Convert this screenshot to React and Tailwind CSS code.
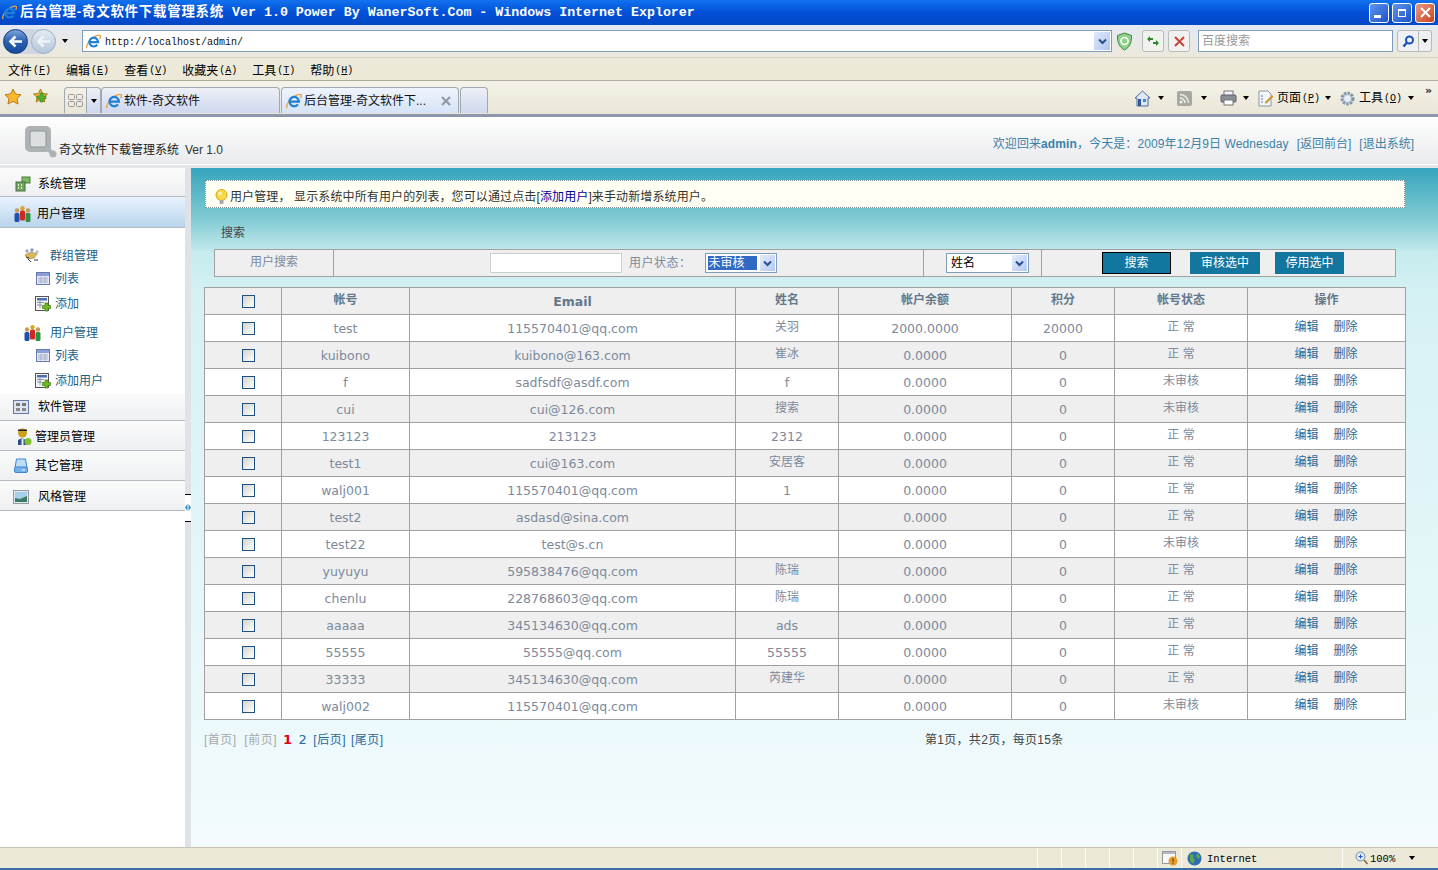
import React from "react";

const cjk = "font-['Liberation_Sans','Noto_Sans_CJK_SC',sans-serif]";
const verdana = "font-['DejaVu_Sans','Noto_Sans_CJK_SC',sans-serif]";
const mono = "font-['Liberation_Mono','Noto_Sans_CJK_SC',monospace]";

const users = [
  ["test", "115570401@qq.com", "关羽", "2000.0000", "20000", "正 常"],
  ["kuibono", "kuibono@163.com", "崔冰", "0.0000", "0", "正 常"],
  ["f", "sadfsdf@asdf.com", "f", "0.0000", "0", "未审核"],
  ["cui", "cui@126.com", "搜索", "0.0000", "0", "未审核"],
  ["123123", "213123", "2312", "0.0000", "0", "正 常"],
  ["test1", "cui@163.com", "安居客", "0.0000", "0", "正 常"],
  ["walj001", "115570401@qq.com", "1", "0.0000", "0", "正 常"],
  ["test2", "asdasd@sina.com", "", "0.0000", "0", "正 常"],
  ["test22", "test@s.cn", "", "0.0000", "0", "未审核"],
  ["yuyuyu", "595838476@qq.com", "陈瑞", "0.0000", "0", "正 常"],
  ["chenlu", "228768603@qq.com", "陈瑞", "0.0000", "0", "正 常"],
  ["aaaaa", "345134630@qq.com", "ads", "0.0000", "0", "正 常"],
  ["55555", "55555@qq.com", "55555", "0.0000", "0", "正 常"],
  ["33333", "345134630@qq.com", "芮建华", "0.0000", "0", "正 常"],
  ["walj002", "115570401@qq.com", "", "0.0000", "0", "未审核"],
];

const IeLogo = ({ size = 16 }) => (
  <svg width={size} height={size} viewBox="0 0 16 16" className="shrink-0">
    <path d="M1 15.200C-.2 12.500 3 6.500 8 3.500c3-1.800 6-2.800 7.200-1.700.8.800.2 2.200-.8 3.400" fill="none" stroke="#e8a33a" strokeWidth="1.300" />
    <path d="M4.300 8.600h8.600A4.700 4.700 0 1 0 12 11.400" fill="none" stroke="#1f80d8" strokeWidth="2.300" />
  </svg>
);

const Arrow = ({ className = "" }) => (
  <span className={`w-0 h-0 border-x-[3.5px] border-x-transparent border-t-[4px] border-t-black shrink-0 ${className}`} />
);

const Chevron = () => (
  <svg width="9" height="7" viewBox="0 0 9 7"><path d="M1 1.500l3.500 3.500L8 1.500" fill="none" stroke="#2a4f8f" strokeWidth="2" /></svg>
);

const Blocks = ({ c = "#6fa85c" }) => (
  <svg width="16" height="16" viewBox="0 0 16 16"><rect x="7" y="1" width="8" height="6" fill="#7dba5e" stroke="#4d7d3a" /><rect x="1" y="6" width="9" height="9" fill={c} stroke="#4d6d4a" /><path d="M3 9h1M6 9h1M3 12h1M6 12h1" stroke="#fff" strokeWidth="1.500" /></svg>
);

const People = () => (
  <svg width="17" height="16" viewBox="0 0 17 16">
    <circle cx="8.500" cy="2.200" r="2.200" fill="#d8a82a" /><rect x="6" y="4.500" width="5" height="10" rx="1.500" fill="#cf2a20" />
    <circle cx="3" cy="4.500" r="2.200" fill="#c89a5a" /><rect x=".5" y="7" width="5" height="9" rx="1.500" fill="#1f52b0" />
    <circle cx="14" cy="4.500" r="2.200" fill="#c89a5a" /><rect x="11.500" y="7" width="5" height="9" rx="1.500" fill="#2f9040" />
  </svg>
);

const Gears = () => (
  <svg width="16" height="15" viewBox="0 0 16 15">
    <circle cx="3" cy="3" r="1.700" fill="#9aa8b8" /><circle cx="8" cy="2" r="1.700" fill="#8a98a8" /><circle cx="13" cy="4" r="1.700" fill="#b8c0c8" />
    <path d="M1 7l6-3 6 2-3 4-6 1z" fill="#d8b85a" stroke="#8a7a3a" strokeWidth=".6" /><path d="M4 11l3 3M10 12h4M2 9l3 1" stroke="#333" />
  </svg>
);

const ListIcon = () => (
  <svg width="14" height="13" viewBox="0 0 14 13"><rect x=".5" y=".5" width="13" height="12" fill="#e8ecf8" stroke="#6678b0" /><rect x="1" y="1" width="12" height="3" fill="#8d9fd8" /><path d="M2 6h10M2 8h10M2 10h10M5 4.500v7M9 4.500v7" stroke="#a8b0c8" /></svg>
);

const AddIcon = () => (
  <svg width="16" height="16" viewBox="0 0 16 16"><rect x=".5" y=".5" width="13" height="14" fill="#f4f4f4" stroke="#555" /><rect x="2" y="2" width="10" height="2.500" fill="#4a6fb0" /><path d="M2 6.500h7M2 9h5M5 5v7" stroke="#8a94a8" /><path d="M10 7h3v2.500h2.500v3H13V15h-3v-2.500H7.500v-3H10z" fill="#6dbb1e" stroke="#3f7d10" strokeWidth=".7" /></svg>
);

const Admin = () => (
  <svg width="16" height="18" viewBox="0 0 16 18"><circle cx="6.500" cy="5" r="4.500" fill="#c9a020" /><path d="M2 3h9v-1.500H2z" fill="#222" /><path d="M2 17v-5l4-2 4 2v5z" fill="#2c4f8c" /><path d="M5.500 10.500h2V17h-2z" fill="#eee" /><circle cx="12" cy="13.500" r="3.500" fill="#7fbf2a" /></svg>
);

const Drive = () => (
  <svg width="14" height="15" viewBox="0 0 14 15"><path d="M2.500 1h9l1.500 9H1z" fill="#bcdcf8" stroke="#3d85d0" /><rect x=".5" y="9" width="13" height="5.500" rx="1.500" fill="#72b0ee" stroke="#3d85d0" /><path d="M8 12h3" stroke="#fff" /></svg>
);

const Landscape = () => (
  <svg width="16" height="14" viewBox="0 0 16 14"><rect x=".5" y=".5" width="15" height="13" fill="#d8e8f4" stroke="#999" /><rect x="2" y="2" width="12" height="10" fill="#a8cfe8" /><path d="M2 12V8l5 1 7-3v6z" fill="#3d7a68" /></svg>
);

const Grid4 = () => (
  <svg width="16" height="14" viewBox="0 0 16 14"><rect x=".5" y=".5" width="15" height="13" fill="#dfe4f4" stroke="#6678a8" /><rect x="3" y="3" width="4" height="3" fill="#777" /><rect x="9" y="3" width="4" height="3" fill="#777" /><rect x="3" y="8" width="4" height="3" fill="#888" /><rect x="9" y="8" width="4" height="3" fill="#888" /></svg>
);

const Bulb = () => (
  <svg width="13" height="16" viewBox="0 0 13 16" className="shrink-0"><circle cx="6.500" cy="6" r="5.500" fill="#f8d848" stroke="#d8a818" /><circle cx="5" cy="4.500" r="1.800" fill="#fff6c0" /><rect x="4.500" y="11" width="4" height="4" rx="1" fill="#a8a8a8" /></svg>
);

const Star = ({ fill, stroke }) => (
  <svg width="18" height="17" viewBox="0 0 18 17"><path d="M9 1l2.400 5 5.600.7-4 3.900 1 5.400L9 13.400 4 16l1-5.400-4-3.900L6.600 6z" fill={fill} stroke={stroke} /></svg>
);

const NavCircle = ({ active }) => (
  <span className={`w-[25px] h-[25px] rounded-full flex items-center justify-center border shrink-0 ${active ? "bg-gradient-to-b from-[#7ba4dc] via-[#2a5fb0] to-[#174a9c] border-[#1b3d78]" : "bg-gradient-to-b from-[#e4ebf3] to-[#b4c6da] border-[#9fb2c8]"}`}>
    <svg width="15" height="13" viewBox="0 0 15 13"><path d="M14 6.500H5M7.500 1.500L2.500 6.500l5 5" fill="none" stroke={active ? "#fff" : "#eef3f8"} strokeWidth="2.600" /></svg>
  </span>
);

const TabShell = ({ children, active, className = "" }) => (
  <div className={`h-[26px] border border-b-0 border-[#a0a8b0] rounded-t-[4px] flex items-center ${active ? "bg-gradient-to-b from-[#eef4fc] to-[#d6e3f7]" : "bg-gradient-to-b from-[#eef0f4] via-[#dde3f3] to-[#cfd8ee]"} ${className}`}>
    {children}
  </div>
);

const WinBtn = ({ children, red }) => (
  <span className={`w-[20px] h-[20px] rounded-[3px] border border-white flex items-center justify-center ${red ? "bg-gradient-to-br from-[#e89a80] to-[#c8401c]" : "bg-gradient-to-br from-[#5f96ee] to-[#1c50c8]"}`}>
    {children}
  </span>
);

const Menu = ({ label, k }) => (
  <span className="flex items-center whitespace-nowrap">
    {label}
    <span className={`${mono} text-[10px] ml-[1px]`}>(<u>{k}</u>)</span>
  </span>
);

const TitleBar = () => (
  <div className="h-[25px] flex items-center pl-[2px] pr-[3px] bg-gradient-to-b from-[#1272ee] via-[#0450d8] to-[#0348c4] text-white font-bold whitespace-nowrap">
    <IeLogo size={15} />
    <span className={`${cjk} text-[13.500px] ml-[3px] tracking-[0.700px]`}>后台管理-奇文软件下载管理系统</span>
    <span className={`${mono} text-[13.300px] ml-[8px]`}>Ver 1.0 Power By WanerSoft.Com - Windows Internet Explorer</span>
    <div className="ml-auto flex gap-[3px]">
      <WinBtn><span className="w-[7px] h-[3px] bg-white mt-[8px] mr-[4px]" /></WinBtn>
      <WinBtn><span className="w-[8px] h-[8px] border border-t-2 border-white" /></WinBtn>
      <WinBtn red><svg width="11" height="11" viewBox="0 0 11 11"><path d="M1 1l9 9M10 1l-9 9" stroke="#fff" strokeWidth="2" /></svg></WinBtn>
    </div>
  </div>
);

const AddressBar = () => (
  <div className="h-[33px] flex items-center pl-[3px] bg-gradient-to-b from-[#e4e9f3] to-[#ece9dc] border-b border-[#d6d2c2]">
    <div className="flex gap-[3px] items-center bg-[#cfd6e0] rounded-full">
      <NavCircle active />
      <NavCircle />
    </div>
    <Arrow className="ml-[6px]" />
    <div className="ml-[14px] w-[1030px] h-[22px] bg-white border border-[#7f9db9] flex items-center pl-[3px]">
      <IeLogo size={15} />
      <span className={`${mono} text-[10px] ml-[4px] mt-[2px] text-[#111]`}>http://localhost/admin/</span>
      <span className="ml-auto w-[16px] h-[18px] mr-[1px] bg-gradient-to-br from-[#dfe8fc] to-[#b0c6f0] flex items-center justify-center"><Chevron /></span>
    </div>
    <svg width="17" height="19" viewBox="0 0 17 19" className="ml-[4px]"><path d="M8.500 1l7 2.500c0 7-1.500 11.500-7 14.500C3 15 1.500 10.500 1.500 3.500z" fill="#8fd08a" stroke="#3d8a44" /><circle cx="8.500" cy="9" r="3.500" fill="none" stroke="#fff" strokeWidth="1.600" /></svg>
    <span className="ml-[9px] w-[22px] h-[22px] rounded-[3px] border border-[#b8bcb8] bg-[#f1f2ef] flex items-center justify-center">
      <svg width="14" height="12" viewBox="0 0 14 12"><path d="M1 4l3-3v2h3v2H4v2zM13 8l-3 3V9H7V7h3V5z" fill="#2c8a2c" /></svg>
    </span>
    <span className="ml-[4px] w-[22px] h-[22px] rounded-[3px] border border-[#b8bcb8] bg-[#f1f2ef] flex items-center justify-center">
      <svg width="11" height="11" viewBox="0 0 11 11"><path d="M1 1l9 9M10 1l-9 9" stroke="#c8443c" strokeWidth="2" /></svg>
    </span>
    <div className={`${cjk} ml-[8px] w-[195px] h-[22px] bg-white border border-[#7f9db9] flex items-center pl-[3px] text-[12px] text-[#999]`}>百度搜索</div>
    <span className="ml-[4px] w-[22px] h-[22px] rounded-l-[3px] border border-[#b8bcb8] bg-[#eef0f2] flex items-center justify-center">
      <svg width="13" height="13" viewBox="0 0 13 13"><circle cx="7.500" cy="5" r="3.500" fill="none" stroke="#1c50b8" strokeWidth="2" /><path d="M5 7.500L1.500 11.500" stroke="#1c50b8" strokeWidth="2.400" /></svg>
    </span>
    <span className="w-[13px] h-[22px] rounded-r-[3px] border border-l-0 border-[#b8bcb8] bg-[#eef0f2] flex items-center justify-center"><Arrow className="border-t-[#1c50b8]" /></span>
  </div>
);

const MenuBar = () => (
  <div className={`${cjk} h-[23px] flex items-center gap-[15px] pl-[8px] pt-[3px] text-[12px] text-black bg-[#ece9d8] border-b border-[#b0ac9e]`}>
    <Menu label="文件" k="F" />
    <Menu label="编辑" k="E" />
    <Menu label="查看" k="V" />
    <Menu label="收藏夹" k="A" />
    <Menu label="工具" k="T" />
    <Menu label="帮助" k="H" />
  </div>
);

const TabBar = () => (
  <div className={`${cjk} h-[36px] flex items-end pl-[4px] text-[12px] bg-gradient-to-b from-[#f5f3e9] to-[#e9e6d7] border-b-[3px] border-[#8e96ac] relative`}>
    <div className="flex items-center self-center mt-[-3px]">
      <Star fill="#f8b830" stroke="#c07810" />
      <span className="ml-[10px]"><svg width="17" height="17" viewBox="0 0 17 17"><path d="M8.500 1l2 4.500 5 .5-3.700 3.300 1 4.700-4.300-2.500L4.200 14l1-4.700L1.500 6l5-.5z" fill="#e8b840" stroke="#a87818" /><path d="M8 5h3v3h3v3h-3v3H8v-3H5V8h3z" fill="#58b02c" stroke="#2d7a10" strokeWidth=".5" /></svg></span>
    </div>
    <div className="flex items-end ml-[15px] mb-[1px]">
      <TabShell className="w-[23px] justify-center rounded-r-none bg-none">
        <svg width="15" height="13" viewBox="0 0 15 13" fill="none" stroke="#999"><rect x=".5" y=".5" width="6" height="5" rx="1" /><rect x="8.500" y=".5" width="6" height="5" rx="1" /><rect x=".5" y="7.500" width="6" height="5" rx="1" /><rect x="8.500" y="7.500" width="6" height="5" rx="1" /></svg>
      </TabShell>
      <TabShell className="w-[14px] justify-center rounded-l-none border-l-0"><Arrow /></TabShell>
      <TabShell className="w-[179px] pl-[4px] text-[#111]">
        <IeLogo size={16} />
        <span className="ml-[2px]">软件-奇文软件</span>
      </TabShell>
      <TabShell active className="w-[178px] ml-[1px] pl-[4px] text-[#111]">
        <IeLogo size={16} />
        <span className="ml-[2px] whitespace-nowrap">后台管理-奇文软件下...</span>
        <svg width="10" height="10" viewBox="0 0 10 10" className="ml-auto mr-[7px]"><path d="M1 1l8 8M9 1l-8 8" stroke="#8f97a6" strokeWidth="2" /></svg>
      </TabShell>
      <TabShell className="w-[28px] ml-[1px]" />
    </div>
    <div className="ml-auto flex items-center self-center mt-[1px] pr-[24px]">
      <svg width="17" height="17" viewBox="0 0 17 17"><path d="M8.500 1L1 8h2v8h11V8h2z" fill="#dfe8f2" stroke="#4a6a98" /><rect x="4" y="9" width="3" height="7" fill="#2c5aa0" /><rect x="9" y="9" width="3" height="3" fill="#3d88d8" /></svg>
      <Arrow className="ml-[7px]" />
      <svg width="15" height="15" viewBox="0 0 15 15" className="ml-[13px]"><rect width="15" height="15" rx="2" fill="#a8a8a0" /><circle cx="4" cy="11" r="1.500" fill="#f2f2ee" /><path d="M3 7a5 5 0 0 1 5 5M3 3.500A8.500 8.500 0 0 1 11.500 12" fill="none" stroke="#f2f2ee" strokeWidth="1.400" /></svg>
      <Arrow className="ml-[9px] border-t-[#c8c8c0]" />
      <svg width="17" height="16" viewBox="0 0 17 16" className="ml-[13px]"><rect x="4" y="1" width="9" height="5" fill="#f4f4f4" stroke="#777" /><rect x="1" y="5" width="15" height="7" rx="1" fill="#8a8f98" stroke="#5a5f68" /><rect x="4" y="10" width="9" height="5" fill="#fff" stroke="#777" /></svg>
      <Arrow className="ml-[6px]" />
      <svg width="16" height="17" viewBox="0 0 16 17" className="ml-[9px]"><path d="M1 1h9l3 3v12H1z" fill="#f4f6fa" stroke="#8a96a8" /><path d="M3 6h2M3 9h2M3 12h2" stroke="#4a80c0" /><path d="M7 12l7-7 1.500 1.500-7 7H7z" fill="#c89838" /></svg>
      <span className="ml-[3px] flex items-center"><Menu label="页面" k="P" /></span>
      <Arrow className="ml-[5px]" />
      <svg width="17" height="17" viewBox="0 0 17 17" className="ml-[8px]"><circle cx="8.500" cy="8.500" r="5.500" fill="#c8d4de" stroke="#7f95a8" strokeWidth="3" strokeDasharray="2.400 1.200" /><circle cx="8.500" cy="8.500" r="3" fill="#e8eef4" /></svg>
      <span className="ml-[3px] flex items-center"><Menu label="工具" k="O" /></span>
      <Arrow className="ml-[6px]" />
    </div>
    <span className={`${verdana} absolute right-[6px] top-[4px] text-[11px] font-bold leading-none text-[#222]`}>»</span>
  </div>
);

const PageHeader = () => (
  <div className={`${cjk} h-[48px] flex items-end pl-[24px] pr-[24px] pb-[5px] bg-gradient-to-b from-white to-[#e9eaec] border-b border-white text-[12px]`}>
    <svg width="34" height="34" viewBox="0 0 34 34">
      <rect x="1" y="1" width="26" height="26" rx="5" fill="#aeb2b4" /><rect x="6" y="6" width="16" height="16" rx="2" fill="#dcdfe0" stroke="#8f9496" />
      <path d="M22 22l7 7" stroke="#aeb2b4" strokeWidth="4" /><circle cx="29" cy="29" r="3.500" fill="#aeb2b4" />
    </svg>
    <span className="ml-[1px] text-[#222]">奇文软件下载管理系统</span>
    <span className="ml-[6px] text-[#333]">Ver 1.0</span>
    <span className="ml-auto mb-[6px] text-[#3b82a8] whitespace-nowrap">
      <span className="tracking-[0.100px]">欢迎回来<b>admin</b>，今天是：2009年12月9日 Wednesday</span>
      <span className="ml-[8px]">[返回前台]</span>
      <span className="ml-[8px]">[退出系统]</span>
    </span>
  </div>
);

const NavRow = ({ icon, label, h, active, gap = 10, pl = 14, pt = 0 }) => (
  <div
    className={`flex items-center border-b border-[#b4bcc2] text-black ${active ? "bg-gradient-to-b from-[#eaf3fd] to-[#b8d4ec]" : "bg-gradient-to-b from-[#fbfbfb] to-[#eef0f2]"}`}
    style={{ height: h, paddingLeft: pl, paddingTop: pt }}
  >
    <span className="shrink-0 flex justify-center" style={{ marginRight: gap }}>{icon}</span>
    {label}
  </div>
);

const SubRow = ({ icon, label, h, pl, gap, mt = 0 }) => (
  <div className="flex items-center text-[#1a6188]" style={{ height: h, paddingLeft: pl, marginTop: mt }}>
    <span className="shrink-0" style={{ marginRight: gap }}>{icon}</span>
    {label}
  </div>
);

const Sidebar = () => (
  <aside className={`${cjk} w-[185px] shrink-0 bg-white text-[12px]`}>
    <NavRow icon={<Blocks />} label="系统管理" h={29} pl={15} gap={7} pt={4} />
    <NavRow icon={<People />} label="用户管理" h={31} pl={14} gap={6} active pt={4} />
    <div className="pt-[14px] h-[165px]">
      <SubRow icon={<Gears />} label="群组管理" h={27} pl={24} gap={10} />
      <SubRow icon={<ListIcon />} label="列表" h={19} pl={36} gap={5} />
      <SubRow icon={<AddIcon />} label="添加" h={31} pl={35} gap={4} />
      <SubRow icon={<People />} label="用户管理" h={27} pl={24} gap={9} />
      <SubRow icon={<ListIcon />} label="列表" h={19} pl={36} gap={5} />
      <SubRow icon={<AddIcon />} label="添加用户" h={25} mt={3} pl={35} gap={4} />
    </div>
    <NavRow icon={<Grid4 />} label="软件管理" h={28} pl={13} gap={9} />
    <NavRow icon={<Admin />} label="管理员管理" h={30} pl={16} gap={3} pt={2} />
    <NavRow icon={<Drive />} label="其它管理" h={30} pl={14} gap={7} />
    <NavRow icon={<Landscape />} label="风格管理" h={30} pl={13} gap={9} pt={2} />
  </aside>
);

const Splitter = () => (
  <div className="w-[6px] shrink-0 bg-[#dfe3e8] flex items-center">
    <div className="h-[28px] w-full bg-white border-y border-black flex items-center justify-center">
      <svg width="6" height="7" viewBox="0 0 6 7"><path d="M2.500 0v7L0 3.500zM3.500 0v7L6 3.500z" fill="#2c8fc8" /></svg>
    </div>
  </div>
);

const FakeSelect = ({ w, selected, children }) => (
  <span className="inline-flex items-center bg-white border border-[#7f9db9] h-[20px] pl-[2px] pr-[1px] text-[12px]" style={{ width: w }}>
    <span className={selected ? "bg-[#316ac5] text-white flex-1 h-[14px] leading-[14px] pl-[1px] mr-[3px]" : "text-black flex-1 pl-[2px]"}>{children}</span>
    <span className="w-[15px] h-[16px] bg-gradient-to-br from-[#e4ecfc] to-[#b4c8f2] flex items-center justify-center"><Chevron /></span>
  </span>
);

const SearchBtn = ({ label, w, focused }) => (
  <span className={`h-[22px] bg-[#12769f] text-white flex items-center justify-center ${focused ? "border border-black" : ""}`} style={{ width: w }}>{label}</span>
);

const CheckCell = () => (
  <td className="border border-[#a0a0a0] text-center p-0 h-[27px] leading-none">
    <span className="inline-block w-[13px] h-[13px] ml-[10px] align-middle border border-[#1c5180] bg-gradient-to-br from-[#d4d4cc] to-white" />
  </td>
);

const Cell = ({ children, head, cn }) => (
  <td className={`border border-[#a0a0a0] text-center p-0 h-[27px] ${head ? "font-bold text-[#64788c]" : "text-[#7c8a9c]"} ${cn ? `${cjk} text-[12px] pb-[2px]` : `${verdana} text-[12.500px] pt-[2px]`}`}>
    {children}
  </td>
);

const hasCjk = (s) => /[\u4e00-\u9fa5]/.test(s);

const UserTable = () => (
  <table className="w-[1201px] ml-[13px] table-fixed border-collapse">
    <colgroup>
      <col className="w-[77px]" />
      <col className="w-[128px]" />
      <col className="w-[326px]" />
      <col className="w-[103px]" />
      <col className="w-[173px]" />
      <col className="w-[103px]" />
      <col className="w-[133px]" />
      <col className="w-[158px]" />
    </colgroup>
    <tbody>
      <tr className="bg-[#efefef]">
        <CheckCell />
        <Cell head cn>帐号</Cell>
        <Cell head>Email</Cell>
        <Cell head cn>姓名</Cell>
        <Cell head cn>帐户余额</Cell>
        <Cell head cn>积分</Cell>
        <Cell head cn>帐号状态</Cell>
        <Cell head cn>操作</Cell>
      </tr>
      {users.map((u, i) => (
        <tr key={i} className={i % 2 ? "bg-[#efefef]" : "bg-white"}>
          <CheckCell />
          <Cell>{u[0]}</Cell>
          <Cell>{u[1]}</Cell>
          <Cell cn={hasCjk(u[2])}>{u[2]}</Cell>
          <Cell>{u[3]}</Cell>
          <Cell>{u[4]}</Cell>
          <Cell cn>{u[5]}</Cell>
          <Cell cn>
            <span className="mr-[1px]">
              <span className="text-[#2a6a9a]">编辑</span>
              <span className="text-[#2a6a9a] ml-[15px]">删除</span>
            </span>
          </Cell>
        </tr>
      ))}
    </tbody>
  </table>
);

const Main = () => (
  <main className={`${cjk} flex-1 bg-[linear-gradient(to_bottom,#36a5bd_0px,#7fcad2_50px,#c6ecee_85px,#d6f1f4_130px,#e6f7f9_450px,#f3fbfe_680px)] pt-[12px] text-[12px] min-w-0`}>
    <div className="ml-[14px] w-[1200px] h-[28px] bg-[#fffff3] border border-dotted border-[#7a8a90] flex items-center pl-[9px] text-[#333] pt-[6px]">
      <Bulb />
      <span className="ml-[2px] tracking-[0.120px]">用户管理， 显示系统中所有用户的列表，您可以通过点击[<span className="text-[#0000a0]">添加用户</span>]来手动新增系统用户。</span>
    </div>
    <div className="ml-[30px] mt-[17px] h-[16px] leading-[16px] text-[#444]">搜索</div>
    <div className="ml-[23px] mt-[8px] w-[1182px] h-[28px] bg-[#efefef] border border-[#a0a0a0] flex items-stretch text-[#7c8a9c]">
      <div className="w-[119px] border-r border-[#a0a0a0] flex items-center justify-center pb-[3px]">用户搜索</div>
      <div className="w-[590px] border-r border-[#a0a0a0] flex items-center pl-[156px]">
        <span className="w-[132px] h-[20px] bg-white border border-[#c8d0d4]" />
        <span className="ml-[7px] tracking-[0.500px]">用户状态：</span>
        <span className="ml-[13px]"><FakeSelect w={72} selected>未审核</FakeSelect></span>
      </div>
      <div className="w-[118px] border-r border-[#a0a0a0] flex items-center pl-[22px]">
        <FakeSelect w={83}>姓名</FakeSelect>
      </div>
      <div className="flex-1 flex items-center pl-[60px] gap-[15px]">
        <span className="mr-[4px]"><SearchBtn label="搜索" w={69} focused /></span>
        <SearchBtn label="审核选中" w={70} />
        <SearchBtn label="停用选中" w={69} />
      </div>
    </div>
    <div className="mt-[10px]"><UserTable /></div>
    <div className="ml-[13px] mt-[12px] w-[1202px] flex text-[#2a6a9a] h-[16px] items-center">
      <span className="w-[721px] whitespace-nowrap tracking-[0.500px]">
        <span className="text-[#a8a8a8]">[首页]&nbsp;&nbsp;[前页]</span>
        <b className={`${verdana} text-[13px] text-[#e00020] ml-[6px]`}>1</b>
        <span className={`${verdana} text-[13px] ml-[6px]`}>2</span>
        <span className="ml-[6px]">[后页]</span>
        <span className="ml-[5px]">[尾页]</span>
      </span>
      <span className="text-[#444] tracking-[0.300px]">第1页，共2页，每页15条</span>
    </div>
  </main>
);

const StatusBar = () => (
  <div className={`${mono} h-[23px] shrink-0 flex items-stretch bg-[#ece9d8] border-t border-[#c8c4b4] border-b-2 border-b-[#3a6ea5] text-[10.500px] text-black`}>
    <div className="w-[1037px]" />
    {[0, 1, 2, 3, 4].map((i) => <div key={i} className="w-[24px] border-l border-[#fbfaf4]" />)}
    <div className="w-[24px] border-l border-[#fbfaf4] flex items-center justify-center">
      <svg width="16" height="15" viewBox="0 0 16 15"><rect x=".5" y=".5" width="13" height="12" fill="#f8f8f8" stroke="#999" /><rect x="1" y="1" width="12" height="2" fill="#b0b8c8" /><circle cx="11" cy="10" r="4.500" fill="#e89c28" /><path d="M11 7.500v3M11 11.500v1" stroke="#222" /></svg>
    </div>
    <div className="w-[161px] border-l border-[#fbfaf4] flex items-center pl-[5px]">
      <svg width="15" height="15" viewBox="0 0 15 15"><circle cx="7.500" cy="7.500" r="7" fill="#2f6cb8" /><path d="M3 3l4 1-1 3 2 2-2 4-3-3zM10 2l3 3-1 3-3-2z" fill="#5aa84a" /></svg>
      <span className="ml-[5px] mt-[3px]">Internet</span>
    </div>
    <div className="flex-1 border-l border-[#fbfaf4] flex items-center pl-[12px]">
      <svg width="13" height="14" viewBox="0 0 13 14"><circle cx="5.500" cy="5.500" r="4.500" fill="#dfeaf8" stroke="#6a8ab0" /><path d="M3.500 5.500h4M5.500 3.500v4" stroke="#1c50b8" /><path d="M9 9l3.500 4" stroke="#8a6a3a" strokeWidth="1.600" /></svg>
      <span className="ml-[2px] mt-[3px]">100%</span>
      <Arrow className="ml-[14px]" />
    </div>
  </div>
);

export default function App() {
  return (
    <div className="w-[1438px] h-[870px] flex flex-col overflow-hidden bg-white">
      <TitleBar />
      <AddressBar />
      <MenuBar />
      <TabBar />
      <PageHeader />
      <div className="h-[3px] bg-[#e4e6e8] shrink-0" />
      <div className="flex-1 flex min-h-0">
        <Sidebar />
        <Splitter />
        <Main />
      </div>
      <StatusBar />
    </div>
  );
}
